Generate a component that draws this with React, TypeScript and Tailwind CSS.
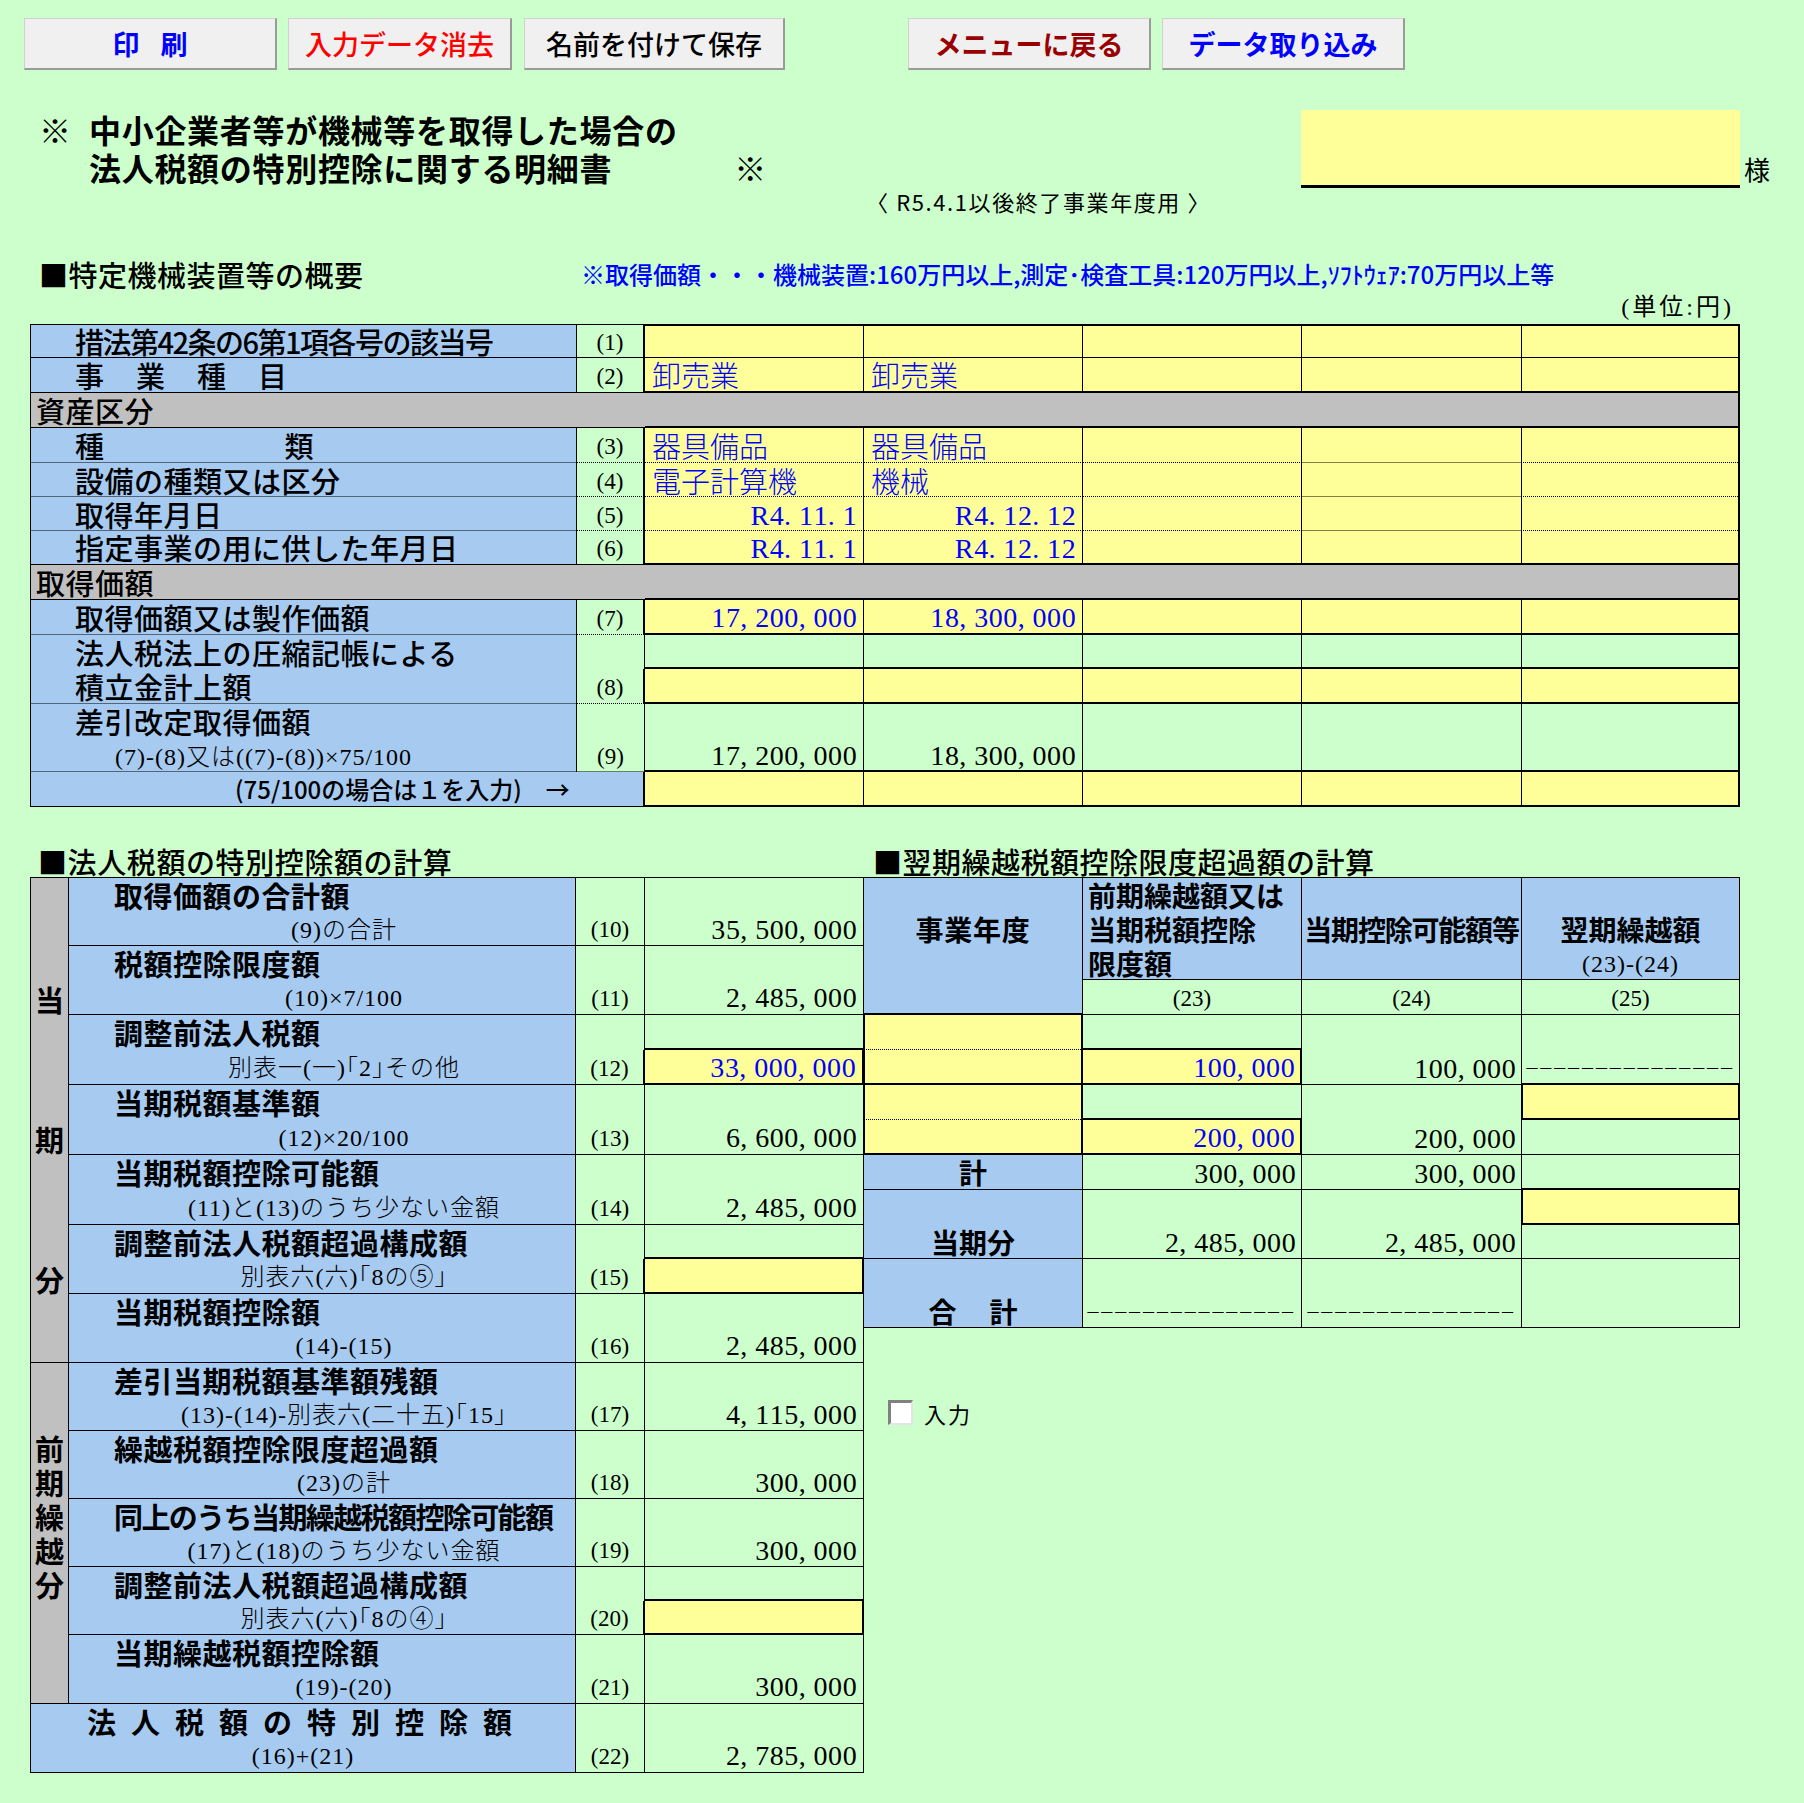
import React from "react";

const SANS = "font-['Noto_Sans_CJK_JP',sans-serif]";
const SERIF = "font-['Liberation_Serif','Noto_Sans_CJK_JP',serif]";
const DOT = "bg-[linear-gradient(to_right,#000_50%,transparent_50%)] bg-[length:2px_1px] bg-bottom bg-repeat-x";
const LB = "bg-[#a6caf0]";
const YE = "bg-[#ffff99]";
const GR = "bg-[#ccffcc]";
const GY = "bg-[#c0c0c0]";
const TW = ["w-[219px]", "w-[219px]", "w-[219px]", "w-[220px]", "w-[218px]"];
const FORM = `${SERIF} text-[24px] font-light leading-none tracking-[1px] whitespace-nowrap`;

function Num({ v, blue = false }: { v: string; blue?: boolean }) {
  return (
    <span className={`${SERIF} inline-flex text-[28px] leading-none ${blue ? "text-[#0000ff]" : "text-black"}`}>
      {v.split("").map((c, i) => (
        <span
          key={i}
          className={
            c === "," || c === "."
              ? "inline-block w-[14.6px] text-left"
              : c === "R"
              ? "inline-block w-[19px] text-left"
              : "inline-block w-[14.6px] text-center"
          }
        >
          {c}
        </span>
      ))}
    </span>
  );
}

function Dashes({ n = 15 }: { n?: number }) {
  return (
    <span className={`${SERIF} inline-flex text-[22px] leading-none text-black`}>
      {Array.from({ length: n }).map((_, i) => (
        <span key={i} className="inline-block w-[13.9px] text-center">
          –
        </span>
      ))}
    </span>
  );
}

function Btn({ w, ml, color, weight, children }: { w: string; ml: string; color: string; weight: string; children: React.ReactNode }) {
  return (
    <div className={`${w} ${ml} h-[52px] bg-[#f0f0f0] border border-[#d0d0d0] border-r-2 border-b-2 border-r-[#9a9a9a] border-b-[#9a9a9a] flex items-center justify-center ${SANS} text-[27px] leading-none ${color} ${weight}`}>
      {children}
    </div>
  );
}

function TLabel({ h, bottom, top = "", children }: { h: string; bottom: string; top?: string; children: React.ReactNode }) {
  return (
    <div className={`w-[547px] ${h} ${LB} ${top} ${bottom} border-l border-r border-black pl-[44px] flex items-center whitespace-nowrap ${SANS} text-[29px] font-medium leading-none tracking-[0.5px]`}>
      {children}
    </div>
  );
}

function TNo({ h, bottom, top = "", children }: { h: string; bottom: string; top?: string; children: React.ReactNode }) {
  return (
    <div className={`w-[68px] ${h} ${GR} ${top} ${bottom} border-r-2 border-black flex items-center justify-center pt-[2px] ${SERIF} text-[23px] leading-none`}>
      {children}
    </div>
  );
}

function TData({ h, bg, bottom, top = "", vals = [], kind = "l", blue = false }: { h: string; bg: string; bottom: string; top?: string; vals?: string[]; kind?: "l" | "r"; blue?: boolean }) {
  return (
    <>
      {TW.map((w, i) => (
        <div
          key={i}
          className={`${w} ${h} ${bg} ${top} ${bottom} ${i === 4 ? "border-r-2" : "border-r"} border-black flex items-center ${kind === "r" ? "justify-end pr-[6px] pt-[3px]" : "pl-[7px]"}`}
        >
          {vals[i] ? (
            kind === "r" ? (
              <Num v={vals[i]} blue={blue} />
            ) : (
              <span className={`${SANS} text-[29px] leading-none font-light ${blue ? "text-[#0000ff]" : "text-black"}`}>{vals[i]}</span>
            )
          ) : null}
        </div>
      ))}
    </>
  );
}

function GrayRow({ text }: { text: string }) {
  return (
    <div className="flex h-[35px]">
      <div className={`w-[615px] ${GY} border-l border-b border-black pl-[5px] flex items-center ${SANS} text-[29px] font-medium leading-none tracking-[0.5px]`}>{text}</div>
      <div className={`w-[1095px] ${GY} border-r-2 border-b-2 border-black`} />
    </div>
  );
}

function TopTable() {
  return (
    <div className="ml-[30px] w-[1710px] mt-[3px] flex flex-col">
      <div className="flex">
        <TLabel h="h-[34px]" top="border-t" bottom="border-b">
          <span className="tracking-[-1.5px]">措法第42条の6第1項各号の該当号</span>
        </TLabel>
        <TNo h="h-[34px]" top="border-t" bottom="border-b">(1)</TNo>
        <TData h="h-[34px]" bg={YE} top="border-t-2" bottom="border-b" />
      </div>
      <div className="flex">
        <TLabel h="h-[35px]" bottom="border-b">
          <span className="tracking-[32px]">事業種目</span>
        </TLabel>
        <TNo h="h-[35px]" bottom="border-b">(2)</TNo>
        <TData h="h-[35px]" bg={YE} bottom="border-b-2" vals={["卸売業", "卸売業"]} blue />
      </div>
      <GrayRow text="資産区分" />
      <div className="flex">
        <TLabel h="h-[35px]" bottom={DOT}>
          <span>種</span>
          <span className="ml-[180px]">類</span>
        </TLabel>
        <TNo h="h-[35px]" bottom={DOT}>(3)</TNo>
        <TData h="h-[35px]" bg={YE} bottom={DOT} vals={["器具備品", "器具備品"]} blue />
      </div>
      <div className="flex">
        <TLabel h="h-[34px]" bottom={DOT}>設備の種類又は区分</TLabel>
        <TNo h="h-[34px]" bottom={DOT}>(4)</TNo>
        <TData h="h-[34px]" bg={YE} bottom={DOT} vals={["電子計算機", "機械"]} blue />
      </div>
      <div className="flex">
        <TLabel h="h-[34px]" bottom={DOT}>取得年月日</TLabel>
        <TNo h="h-[34px]" bottom={DOT}>(5)</TNo>
        <TData h="h-[34px]" bg={YE} bottom={DOT} vals={["R4.11.1", "R4.12.12"]} kind="r" blue />
      </div>
      <div className="flex">
        <TLabel h="h-[34px]" bottom="border-b">指定事業の用に供した年月日</TLabel>
        <TNo h="h-[34px]" bottom="border-b">(6)</TNo>
        <TData h="h-[34px]" bg={YE} bottom="border-b-2" vals={["R4.11.1", "R4.12.12"]} kind="r" blue />
      </div>
      <GrayRow text="取得価額" />
      <div className="flex">
        <TLabel h="h-[35px]" bottom={DOT}>取得価額又は製作価額</TLabel>
        <TNo h="h-[35px]" bottom={DOT}>(7)</TNo>
        <TData h="h-[35px]" bg={YE} bottom="border-b-2" vals={["17,200,000", "18,300,000"]} kind="r" blue />
      </div>
      {/* (8) */}
      <div className="flex">
        <div className={`w-[547px] ${LB} border-l border-r border-black flex flex-col whitespace-nowrap ${SANS} text-[29px] font-medium leading-none tracking-[0.5px]`}>
          <div className="h-[34px] pl-[44px] flex items-center">法人税法上の圧縮記帳による</div>
          <div className={`h-[35px] pl-[44px] flex items-center ${DOT}`}>積立金計上額</div>
        </div>
        <div className="w-[68px] flex flex-col">
          <div className={`h-[34px] ${GR} border-r border-black`} />
          <div className={`h-[35px] ${GR} ${DOT} border-r-2 border-black flex items-center justify-center pt-[2px] ${SERIF} text-[23px] leading-none`}>(8)</div>
        </div>
        {TW.map((w, i) => (
          <div key={i} className={`${w} flex flex-col`}>
            <div className={`h-[34px] ${GR} ${i === 4 ? "border-r-2" : "border-r"} border-b-2 border-black`} />
            <div className={`h-[35px] ${YE} ${i === 4 ? "border-r-2" : "border-r"} border-b-2 border-black`} />
          </div>
        ))}
      </div>
      {/* (9) */}
      <div className="flex">
        <div className={`w-[547px] ${LB} border-l border-r border-black flex flex-col`}>
          <div className={`h-[34px] pl-[44px] flex items-center whitespace-nowrap ${SANS} text-[29px] font-medium leading-none tracking-[0.5px]`}>差引改定取得価額</div>
          <div className={`h-[34px] pl-[84px] flex items-center pt-[3px] ${DOT} ${FORM}`}>(7)-(8)又は((7)-(8))×75/100</div>
        </div>
        <div className="w-[68px] flex flex-col">
          <div className={`h-[34px] ${GR} border-r border-black`} />
          <div className={`h-[34px] ${GR} ${DOT} border-r border-black flex items-center justify-center pt-[2px] ${SERIF} text-[23px] leading-none`}>(9)</div>
        </div>
        {TW.map((w, i) => (
          <div key={i} className={`${w} flex flex-col`}>
            <div className={`h-[34px] ${GR} ${i === 4 ? "border-r-2" : "border-r"} border-black`} />
            <div className={`h-[34px] ${GR} ${i === 4 ? "border-r-2" : "border-r"} border-b-2 border-black flex items-center justify-end pr-[6px] pt-[3px]`}>
              {i === 0 ? <Num v="17,200,000" /> : i === 1 ? <Num v="18,300,000" /> : null}
            </div>
          </div>
        ))}
      </div>
      {/* 75/100 */}
      <div className="flex">
        <div className={`w-[615px] h-[35px] ${LB} border-l border-r-2 border-b border-black flex items-center pl-[204px] whitespace-nowrap ${SANS} text-[24px] font-medium leading-none`}>
          (75/100の場合は１を入力)<span className="ml-[24px]">→</span>
        </div>
        <TData h="h-[35px]" bg={YE} bottom="border-b-2" />
      </div>
    </div>
  );
}

function LRow({ h1, h2, label, formula, no, value, blue = false, box = false, tight = false }: { h1: string; h2: string; label: string; formula: string; no: string; value?: string; blue?: boolean; box?: boolean; tight?: boolean }) {
  return (
    <div className="flex">
      <div className={`w-[507px] ${LB} border-r border-black flex flex-col`}>
        <div className={`${h1} pl-[45px] flex items-center whitespace-nowrap ${SANS} text-[29px] font-bold leading-none ${tight ? "tracking-[-1.6px]" : "tracking-[0.5px]"}`}>{label}</div>
        <div className={`${h2} border-b border-black pl-[44px] pt-[2px] flex items-center justify-center ${FORM}`}>{formula}</div>
      </div>
      <div className="w-[69px] flex flex-col">
        <div className={`${h1} ${GR} border-r border-black`} />
        <div className={`${h2} ${GR} ${box ? "border-r-2" : "border-r"} border-b border-black flex items-center justify-center pt-[2px] ${SERIF} text-[23px] leading-none`}>{no}</div>
      </div>
      <div className="w-[219px] flex flex-col">
        <div className={`${h1} ${GR} border-r border-black ${box ? "border-b-2" : ""}`} />
        <div className={`${h2} ${box ? `${YE} border-r-2 border-b-2` : `${GR} border-r border-b`} border-black flex items-center justify-end pr-[6px] pt-[2px]`}>
          {value ? <Num v={value} blue={blue} /> : null}
        </div>
      </div>
    </div>
  );
}

function LeftTable() {
  const sec = `${SANS} text-[29px] font-bold leading-none h-[34px] flex items-center`;
  return (
    <div className="w-[834px] border-t border-black flex flex-col">
      <div className="flex">
        <div className="w-[39px] flex flex-col">
          <div className={`h-[485px] ${GY} border-l border-r border-b border-black flex flex-col items-center pt-[104px] gap-[106px]`}>
            <span className={sec}>当</span>
            <span className={sec}>期</span>
            <span className={sec}>分</span>
          </div>
          <div className={`h-[341px] ${GY} border-l border-r border-b border-black flex flex-col items-center pt-[68px]`}>
            <span className={sec}>前</span>
            <span className={sec}>期</span>
            <span className={sec}>繰</span>
            <span className={sec}>越</span>
            <span className={sec}>分</span>
          </div>
        </div>
        <div className="flex flex-col">
          <LRow h1="h-[34px]" h2="h-[34px]" label="取得価額の合計額" formula="(9)の合計" no="(10)" value="35,500,000" />
          <LRow h1="h-[34px]" h2="h-[35px]" label="税額控除限度額" formula="(10)×7/100" no="(11)" value="2,485,000" />
          <LRow h1="h-[35px]" h2="h-[35px]" label="調整前法人税額" formula="別表一(一)｢2｣その他" no="(12)" value="33,000,000" blue box />
          <LRow h1="h-[35px]" h2="h-[35px]" label="当期税額基準額" formula="(12)×20/100" no="(13)" value="6,600,000" />
          <LRow h1="h-[35px]" h2="h-[35px]" label="当期税額控除可能額" formula="(11)と(13)のうち少ない金額" no="(14)" value="2,485,000" />
          <LRow h1="h-[34px]" h2="h-[35px]" label="調整前法人税額超過構成額" formula="別表六(六)｢8の⑤｣" no="(15)" box />
          <LRow h1="h-[34px]" h2="h-[35px]" label="当期税額控除額" formula="(14)-(15)" no="(16)" value="2,485,000" />
          <LRow h1="h-[34px]" h2="h-[34px]" label="差引当期税額基準額残額" formula="(13)-(14)-別表六(二十五)｢15｣" no="(17)" value="4,115,000" />
          <LRow h1="h-[34px]" h2="h-[34px]" label="繰越税額控除限度超過額" formula="(23)の計" no="(18)" value="300,000" />
          <LRow h1="h-[34px]" h2="h-[34px]" label="同上のうち当期繰越税額控除可能額" formula="(17)と(18)のうち少ない金額" no="(19)" value="300,000" tight />
          <LRow h1="h-[34px]" h2="h-[34px]" label="調整前法人税額超過構成額" formula="別表六(六)｢8の④｣" no="(20)" box />
          <LRow h1="h-[34px]" h2="h-[35px]" label="当期繰越税額控除額" formula="(19)-(20)" no="(21)" value="300,000" />
        </div>
      </div>
      <div className="flex">
        <div className={`w-[546px] ${LB} border-l border-r border-black flex flex-col`}>
          <div className={`h-[34px] pl-[56px] flex items-center whitespace-nowrap ${SANS} text-[29px] font-bold leading-none tracking-[15px]`}>法人税額の特別控除額</div>
          <div className={`h-[35px] border-b border-black pt-[2px] flex items-center justify-center ${FORM}`}>(16)+(21)</div>
        </div>
        <div className="w-[69px] flex flex-col">
          <div className={`h-[34px] ${GR} border-r border-black`} />
          <div className={`h-[35px] ${GR} border-r border-b border-black flex items-center justify-center pt-[2px] ${SERIF} text-[23px] leading-none`}>(22)</div>
        </div>
        <div className="w-[219px] flex flex-col">
          <div className={`h-[34px] ${GR} border-r border-black`} />
          <div className={`h-[35px] ${GR} border-r border-b border-black flex items-center justify-end pr-[6px] pt-[2px]`}>
            <Num v="2,785,000" />
          </div>
        </div>
      </div>
    </div>
  );
}

const HD = `${SANS} text-[28px] font-bold leading-none whitespace-nowrap`;

function RightTable() {
  return (
    <div className="w-[876px] border-t border-black flex flex-col">
      {/* header */}
      <div className="flex">
        <div className={`w-[219px] h-[137px] ${LB} border-r border-b-2 border-black flex flex-col`}>
          <div className={`h-[101px] flex items-center justify-center tracking-[0.7px] ${HD}`}>事業年度</div>
        </div>
        <div className="w-[219px] flex flex-col">
          <div className={`h-[102px] ${LB} border-r border-b border-black flex flex-col pl-[5px] ${HD}`}>
            <div className="h-[34px] flex items-center">前期繰越額又は</div>
            <div className="h-[34px] flex items-center">当期税額控除</div>
            <div className="h-[33px] flex items-center">限度額</div>
          </div>
          <div className={`h-[35px] ${GR} border-r border-b border-black flex items-center justify-center pt-[2px] ${SERIF} text-[23px] leading-none`}>(23)</div>
        </div>
        <div className="w-[220px] flex flex-col">
          <div className={`h-[102px] ${LB} border-r border-b border-black flex items-center justify-center tracking-[-1.2px] ${HD}`}>当期控除可能額等</div>
          <div className={`h-[35px] ${GR} border-r border-b border-black flex items-center justify-center pt-[2px] ${SERIF} text-[23px] leading-none`}>(24)</div>
        </div>
        <div className="w-[218px] flex flex-col">
          <div className={`h-[102px] ${LB} border-r border-b border-black flex flex-col`}>
            <div className="h-[34px]" />
            <div className={`h-[34px] flex items-center justify-center ${HD}`}>翌期繰越額</div>
            <div className={`h-[33px] flex items-center justify-center pt-[3px] ${FORM}`}>(23)-(24)</div>
          </div>
          <div className={`h-[35px] ${GR} border-r border-b border-black flex items-center justify-center pt-[2px] ${SERIF} text-[23px] leading-none`}>(25)</div>
        </div>
      </div>
      {/* rows A & B */}
      {[
        { v: "100,000", last: "A" },
        { v: "200,000", last: "B" },
      ].map((r) => (
        <div className="flex" key={r.last}>
          <div className="w-[219px] flex flex-col">
            <div className={`h-[35px] ${YE} ${DOT} border-l border-r-2 border-black`} />
            <div className={`h-[35px] ${YE} border-l border-r-2 border-b-2 border-black`} />
          </div>
          <div className="w-[219px] flex flex-col">
            <div className={`h-[35px] ${GR} border-r border-b-2 border-black`} />
            <div className={`h-[35px] ${YE} border-r-2 border-b-2 border-black flex items-center justify-end pr-[5px] pt-[3px]`}>
              <Num v={r.v} blue />
            </div>
          </div>
          <div className={`w-[220px] h-[70px] ${GR} border-r border-b border-black flex flex-col justify-end`}>
            <div className="h-[34px] flex items-center justify-end pr-[5px] pt-[3px]">
              <Num v={r.v} />
            </div>
          </div>
          {r.last === "A" ? (
            <div className={`w-[218px] h-[70px] ${GR} border-r border-b-2 border-black flex flex-col justify-end`}>
              <div className="h-[33px] flex items-center pl-[3px]">
                <Dashes />
              </div>
            </div>
          ) : (
            <div className="w-[218px] flex flex-col">
              <div className={`h-[35px] ${YE} border-l border-r-2 border-b-2 border-black`} />
              <div className={`h-[35px] ${GR} border-r border-b border-black`} />
            </div>
          )}
        </div>
      ))}
      {/* row C */}
      <div className="flex h-[35px]">
        <div className={`w-[219px] ${LB} border-r border-b border-black flex items-center justify-center ${HD}`}>計</div>
        <div className={`w-[219px] ${GR} border-r border-b border-black flex items-center justify-end pr-[5px] pt-[3px]`}>
          <Num v="300,000" />
        </div>
        <div className={`w-[220px] ${GR} border-r border-b border-black flex items-center justify-end pr-[5px] pt-[3px]`}>
          <Num v="300,000" />
        </div>
        <div className={`w-[218px] ${GR} border-r border-b-2 border-black`} />
      </div>
      {/* row D */}
      <div className="flex">
        <div className={`w-[219px] h-[69px] ${LB} border-r border-b border-black flex flex-col justify-end`}>
          <div className={`h-[33px] flex items-center justify-center ${HD}`}>当期分</div>
        </div>
        <div className={`w-[219px] h-[69px] ${GR} border-r border-b border-black flex flex-col justify-end`}>
          <div className="h-[33px] flex items-center justify-end pr-[5px] pt-[3px]">
            <Num v="2,485,000" />
          </div>
        </div>
        <div className={`w-[220px] h-[69px] ${GR} border-r border-b border-black flex flex-col justify-end`}>
          <div className="h-[33px] flex items-center justify-end pr-[5px] pt-[3px]">
            <Num v="2,485,000" />
          </div>
        </div>
        <div className="w-[218px] flex flex-col">
          <div className={`h-[35px] ${YE} border-l border-r-2 border-b-2 border-black`} />
          <div className={`h-[34px] ${GR} border-r border-b border-black`} />
        </div>
      </div>
      {/* row E */}
      <div className="flex">
        <div className={`w-[219px] h-[69px] ${LB} border-r border-b border-black flex flex-col justify-end`}>
          <div className={`h-[33px] flex items-center justify-center ${HD}`}>
            <span>合</span>
            <span className="ml-[33px]">計</span>
          </div>
        </div>
        <div className={`w-[219px] h-[69px] ${GR} border-r border-b border-black flex flex-col justify-end`}>
          <div className="h-[33px] flex items-center pl-[3px]">
            <Dashes />
          </div>
        </div>
        <div className={`w-[220px] h-[69px] ${GR} border-r border-b border-black flex flex-col justify-end`}>
          <div className="h-[33px] flex items-center pl-[4px]">
            <Dashes />
          </div>
        </div>
        <div className={`w-[218px] h-[69px] ${GR} border-r border-b border-black`} />
      </div>
    </div>
  );
}

export default function App() {
  return (
    <div className={`w-[1804px] min-h-[1803px] ${GR} text-black ${SANS}`}>
      {/* buttons */}
      <div className="flex pt-[18px] pl-[24px]">
        <Btn w="w-[253px]" ml="" color="text-[#0000ff]" weight="font-bold">
          <span>印</span>
          <span className="ml-[21px]">刷</span>
        </Btn>
        <Btn w="w-[224px]" ml="ml-[11px]" color="text-[#ff0000]" weight="font-medium">入力データ消去</Btn>
        <Btn w="w-[261px]" ml="ml-[12px]" color="text-black" weight="font-medium">名前を付けて保存</Btn>
        <Btn w="w-[243px]" ml="ml-[123px]" color="text-[#990000]" weight="font-bold">メニューに戻る</Btn>
        <Btn w="w-[243px]" ml="ml-[11px]" color="text-[#0000ff]" weight="font-bold">データ取り込み</Btn>
      </div>

      {/* title row */}
      <div className="flex mt-[40px]">
        <div className={`w-[1301px] pl-[39px] ${SANS} font-bold text-[32px] tracking-[0.7px] leading-none whitespace-nowrap`}>
          <div className="flex h-[38px] items-center">
            <span className="w-[50px]">※</span>
            <span>中小企業者等が機械等を取得した場合の</span>
          </div>
          <div className="flex h-[38px] items-center">
            <span className="w-[50px]" />
            <span>法人税額の特別控除に関する明細書</span>
            <span className="ml-[122px]">※</span>
          </div>
        </div>
        <div className={`w-[439px] h-[78px] ${YE} border-b-[3px] border-black`} />
        <div className={`ml-[4px] mt-[44px] h-[30px] flex items-center ${SANS} text-[26px] leading-none`}>様</div>
      </div>

      <div className={`h-[26px] pl-[866px] flex items-center ${SANS} text-[22px] leading-none tracking-[1.6px] whitespace-nowrap`}>〈 R5.4.1以後終了事業年度用 〉</div>

      <div className="flex items-center h-[34px] mt-[43px]">
        <div className={`w-[581px] pl-[39px] ${SANS} text-[29px] font-medium tracking-[0.5px] leading-none whitespace-nowrap`}>■特定機械装置等の概要</div>
        <div className={`${SANS} text-[24px] text-[#0000ff] font-medium leading-none whitespace-nowrap`}>
          ※取得価額・・・機械装置:160万円以上,測定･検査工具:120万円以上,ｿﾌﾄｳｪｱ:70万円以上等
        </div>
      </div>

      <div className={`mt-[2px] h-[28px] w-[1734px] flex items-center justify-end ${SERIF} text-[24px] leading-none tracking-[3px]`}>(単位:円)</div>

      <TopTable />

      {/* lower section */}
      <div className="flex mt-[39px]">
        <div className="w-[864px] pl-[30px]">
          <div className={`h-[31px] pl-[8px] flex items-center whitespace-nowrap ${SANS} text-[29px] font-medium tracking-[0.6px] leading-none`}>■法人税額の特別控除額の計算</div>
          <LeftTable />
        </div>
        <div className="w-[876px]">
          <div className={`h-[31px] pl-[9px] flex items-center whitespace-nowrap ${SANS} text-[29px] font-medium tracking-[0.5px] leading-none`}>■翌期繰越税額控除限度超過額の計算</div>
          <RightTable />
          <div className="flex items-center mt-[72px] pl-[24px]">
            <div className="w-[25px] h-[25px] bg-white border-t-[3px] border-l-[3px] border-b-2 border-r-2 border-t-[#808080] border-l-[#808080] border-b-[#e4e4e4] border-r-[#e4e4e4]" />
            <span className={`ml-[11px] ${SANS} text-[22px] leading-none tracking-[2px]`}>入力</span>
          </div>
        </div>
      </div>
    </div>
  );
}
